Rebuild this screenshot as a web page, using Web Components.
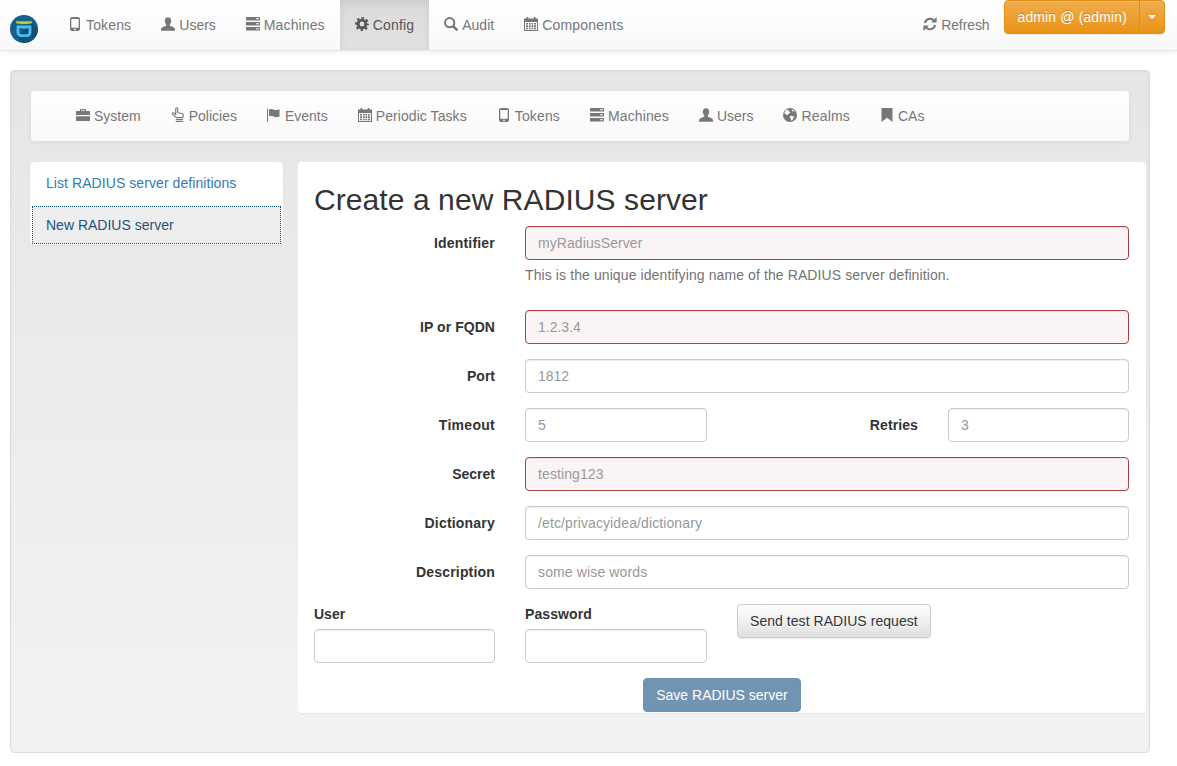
<!DOCTYPE html>
<html lang="en">
<head>
<meta charset="utf-8">
<title>Create a new RADIUS server</title>
<style>
html,body{margin:0;padding:0;height:766px;overflow:hidden;background:#fff}
body{font:14px/20px "Liberation Sans",Arial,sans-serif;color:#333}
</style>
</head>
<body>
<pi-navbar>
  <pi-logo slot="logo"></pi-logo>
  <pi-nav-item icon="phone" style="letter-spacing:.15px">Tokens</pi-nav-item>
  <pi-nav-item icon="user">Users</pi-nav-item>
  <pi-nav-item icon="tasks" style="letter-spacing:.12px">Machines</pi-nav-item>
  <pi-nav-item icon="cog" active style="letter-spacing:.17px">Config</pi-nav-item>
  <pi-nav-item icon="search">Audit</pi-nav-item>
  <pi-nav-item icon="calendar" style="letter-spacing:.2px">Components</pi-nav-item>
  <pi-nav-item slot="right" icon="refresh" style="letter-spacing:-.1px">Refresh</pi-nav-item>
  <pi-split-button slot="right" style="letter-spacing:.13px">admin @ (admin)</pi-split-button>
</pi-navbar>
<pi-well>
  <pi-subnav>
    <pi-nav-item sub icon="briefcase">System</pi-nav-item>
    <pi-nav-item sub icon="hand">Policies</pi-nav-item>
    <pi-nav-item sub icon="flag">Events</pi-nav-item>
    <pi-nav-item sub icon="calendar" style="letter-spacing:.07px">Periodic Tasks</pi-nav-item>
    <pi-nav-item sub icon="phone" style="letter-spacing:.15px">Tokens</pi-nav-item>
    <pi-nav-item sub icon="tasks" style="letter-spacing:.12px">Machines</pi-nav-item>
    <pi-nav-item sub icon="user">Users</pi-nav-item>
    <pi-nav-item sub icon="globe" style="letter-spacing:.17px">Realms</pi-nav-item>
    <pi-nav-item sub icon="bookmark">CAs</pi-nav-item>
  </pi-subnav>
  <pi-columns>
    <pi-side-menu slot="side">
      <pi-side-link style="letter-spacing:.07px">List RADIUS server definitions</pi-side-link>
      <pi-side-link current>New RADIUS server</pi-side-link>
    </pi-side-menu>
    <pi-panel>
      <pi-title style="letter-spacing:.08px">Create a new RADIUS server</pi-title>
      <pi-field label="Identifier" ls=".2" pls=".07" placeholder="myRadiusServer" invalid help="This is the unique identifying name of the RADIUS server definition."></pi-field>
      <pi-field label="IP or FQDN" ls=".05" placeholder="1.2.3.4" invalid></pi-field>
      <pi-field label="Port" placeholder="1812"></pi-field>
      <pi-field-pair label="Timeout" placeholder="5" label2="Retries" placeholder2="3"></pi-field-pair>
      <pi-field label="Secret" pls=".1" placeholder="testing123" invalid></pi-field>
      <pi-field label="Dictionary" ls=".2" pls=".11" placeholder="/etc/privacyidea/dictionary"></pi-field>
      <pi-field label="Description" ls=".18" pls=".13" placeholder="some wise words"></pi-field>
      <pi-test-row></pi-test-row>
      <pi-actions><pi-button kind="primary">Save RADIUS server</pi-button></pi-actions>
    </pi-panel>
  </pi-columns>
</pi-well>
<script>
const ICONS = {
  phone:'<path fill-rule="evenodd" d="M4.200 0h5.600C10.900 0 12 .9 12 2v10c0 1.100-1.100 2-2.200 2H4.200C3.100 14 2 13.100 2 12V2C2 .9 3.100 0 4.200 0zM3.300 1.900v8.900h7.400V1.900zM7 11.500a.9.9 0 1 0 0 1.800.9.900 0 0 0 0-1.800z"/>',
  user:'<path d="M7 .2C5 .2 3.800 1.700 3.800 3.800c0 1.500.6 2.900 1.400 3.700v1.300C3.500 9.600.4 10.200 0 12v1.800h14V12c-.4-1.800-3.500-2.400-5.200-3.200V7.500c.8-.8 1.400-2.200 1.400-3.700C10.200 1.700 9 .2 7 .2z"/>',
  tasks:'<path fill-rule="evenodd" d="M.6 0h12.800c.3 0 .6.300.6.600v3H0v-3C0 .3.300 0 .6 0zM10 1.300v1h3v-1zM0 5h14v3.500H0zM9.800 6.300v1h3.200v-1zM0 9.900h14v3.100c0 .3-.3.600-.6.600H.6c-.3 0-.6-.3-.6-.6zM10 11.200v1h3v-1z"/>',
  cog:'<circle cx="7" cy="7" r="3.900" fill="none" stroke="currentColor" stroke-width="2.900"/><circle cx="7" cy="7" r="6" fill="none" stroke="currentColor" stroke-width="2" stroke-dasharray="2.400 2.312" stroke-dashoffset="1.200"/>',
  search:'<path fill="none" stroke="currentColor" stroke-width="2" d="M5.700 1.100a4.600 4.600 0 1 0 0 9.200 4.600 4.600 0 0 0 0-9.200z"/><path fill="none" stroke="currentColor" stroke-width="2.500" stroke-linecap="round" d="M9.300 9.300l3.400 3.400"/>',
  calendar:'<path fill-rule="evenodd" d="M2.500 0h1.800v1.500h5.400V0h1.800v1.500H14V14H0V1.500h2.500zM1 5v8h12V5z"/><path d="M2 6h2v1.500H2zM5 6h1.700v1.500H5zM7.500 6h1.700v1.500H7.500zM10 6h2v1.500h-2zM2 8.300h2v1.600H2zM5 8.300h1.700v1.600H5zM7.500 8.300h1.700v1.600H7.500zM10 8.300h2v1.600h-2zM2 10.700h2v1.500H2zM5 10.700h1.700v1.500H5zM7.500 10.700h1.700v1.500H7.500zM10 10.700h2v1.500h-2z"/>',
  refresh:'<path fill="none" stroke="currentColor" stroke-width="2" d="M1.900 6.200A5.200 5.200 0 0 1 11 3.600"/><path d="M13.600 0v5.500H8.100z"/><path fill="none" stroke="currentColor" stroke-width="2" d="M12.100 7.800A5.200 5.200 0 0 1 3 10.400"/><path d="M.4 14V8.500h5.500z"/>',
  briefcase:'<path d="M5 1h4c.6 0 1 .4 1 1v1h3c.6 0 1 .4 1 1v3H0V4c0-.6.4-1 1-1h3V2c0-.6.4-1 1-1zm.200 1.200V3h3.600v-.8zM0 8.200h14V12c0 .6-.4 1-1 1H1c-.6 0-1-.4-1-1z"/>',
  hand:'<path fill="none" stroke="currentColor" stroke-width="1.100" stroke-linejoin="round" d="M4.700 .8c0-1.300 2-1.300 2 0v3.900l3.600.6c1.500.2 2.200 1 2 2.300l-.5 2H5.300L1.700 6.300c-.9-1 .4-2.100 1.300-1.200l1.700 1.400z"/><path d="M5.200 10.900h6.400c.3 0 .5.200.5.500v.7H4.700v-.7c0-.3.200-.5.500-.5zM4.700 12.800h7.400v.8c0 .3-.2.500-.5.500H5.200c-.3 0-.5-.2-.5-.5z"/>',
  flag:'<path d="M0 .5h1v13.300H0zM2 1.500c1.500-.7 3-.7 4.500 0s3 .7 4.500 0h1.500v7.300H11c-1.500.5-3 .5-4.500-.2s-3-.6-4.500-.1z"/>',
  globe:'<path fill-rule="evenodd" d="M7 0a7 7 0 1 1 0 14A7 7 0 0 1 7 0zM4.700 1.300C3 2 1.700 3.400 1.200 5.200c.7 0 1.100.5 1.500 1.100.6.700 1.400.8 2 .6.500-.2.500-1 1.100-1.400.6-.5 1.300-.4 1.400-1 .1-.5-.6-.6-1.100-.9-.5-.400-.2-1-.8-1.300-.3-.2-.6-.2-.6-1zM9 1.400c-.5.500-.2 1.200.300 1.700.5.500 1.400.4 2 .2.300-.1.600-.1.700 0C11.200 2.400 10.200 1.800 9 1.400zM8.600 7.800c-.7-.3-1.600 0-1.800.7-.2.700.4 1.200.8 1.800.4.600.1 1.400.500 2.200.4.200 1 .1 1.400-.5.500-.7.400-1.500 1-2.100.3-.5.900-.8.500-1.400-.4-.5-1-.1-1.500-.2-.300-.1-.500-.4-.9-.5z"/>',
  bookmark:'<path d="M1.500 0h11v14L7 9.700 1.500 14z"/>'
};

function define(name, css, html, setup){
  customElements.define(name, class extends HTMLElement{
    constructor(){
      super();
      const r = this.attachShadow({mode:'open'});
      r.innerHTML = '<style>' + css + '</style>' + html;
    }
    connectedCallback(){ if(setup) setup.call(this, this.shadowRoot); }
  });
}

define('pi-navbar', `
  :host{display:flex;height:50px;box-sizing:content-box;border-bottom:1px solid #e7e7e7;
    background:linear-gradient(to bottom,#fff 0,#f8f8f8 100%);
    box-shadow:inset 0 1px 0 rgba(255,255,255,.15),0 1px 5px rgba(0,0,0,.075)}
  .left{display:flex;flex:1}
  .right{display:flex;padding-right:12px}
`, `<div class="left"><slot name="logo"></slot><slot></slot></div><div class="right"><slot name="right"></slot></div>`);

define('pi-logo', `
  :host{display:flex;width:53px;padding:15px 0 0 10px;box-sizing:border-box}
  svg{display:block;width:28px;height:28px}
`, `<svg viewBox="0 0 28 28" aria-hidden="true"><circle cx="14" cy="14" r="14" fill="#14628b"/><path d="M6 21.500L13 28a14 14 0 0 0 15-13.500L22 8z" fill="#0f4c6e" opacity=".75"/><path d="M6 6.300h16v1.700c-2 1.300-14 1.300-16 0z" fill="#b6cb2f"/><path fill="#4cbcf0" fill-rule="evenodd" d="M6.600 10.500h14.800v7c0 2.700-2 4.500-4.500 4.500h-5.800c-2.500 0-4.500-1.800-4.500-4.500zM9.400 13.100v4.200c0 1.200.8 2 2 2h5.200c1.200 0 2-.8 2-2v-4.200c-2 .7-7.200.7-9.200 0z"/></svg>`);

define('pi-nav-item', `
  :host{display:flex;align-items:center;height:50px;padding:0 15px;color:#777;white-space:nowrap}
  :host([active]){color:#555;background:linear-gradient(to bottom,#dbdbdb 0,#e2e2e2 100%);box-shadow:inset 0 3px 9px rgba(0,0,0,.075)}
  svg{display:block;width:14px;height:14px;margin-right:4px;fill:currentColor;flex:none;position:relative;top:-1px;overflow:visible}
`, `<svg viewBox="0 0 14 14" aria-hidden="true"></svg><slot></slot>`, function(r){
  r.querySelector('svg').innerHTML = ICONS[this.getAttribute('icon')] || '';
});

define('pi-split-button', `
  :host{display:flex;height:34px;color:#fff;line-height:20px}
  div{background:linear-gradient(to bottom,#f0ad4e 0,#eb9316 100%);border:1px solid #e38d13;box-sizing:border-box;height:34px;
    text-shadow:0 -1px 0 rgba(0,0,0,.2);box-shadow:inset 0 1px 0 rgba(255,255,255,.15),0 1px 1px rgba(0,0,0,.075)}
  .main{padding:6px 12px;border-radius:4px 0 0 4px}
  .caret{width:26px;margin-left:-1px;border-radius:0 4px 4px 0;display:flex;align-items:center;justify-content:center}
  i{display:block;width:0;height:0;border-top:4px solid #fff;border-left:4px solid transparent;border-right:4px solid transparent}
`, `<div class="main"><slot></slot></div><div class="caret"><i></i></div>`);

define('pi-well', `
  :host{display:block;box-sizing:border-box;width:1140px;height:683px;margin:19px 0 0 10px;padding:20px 19px 19px;
    border:1px solid #dcdcdc;border-radius:4px;background:linear-gradient(to bottom,#e6e6e6 0,#f3f3f3 100%);
    box-shadow:inset 0 1px 3px rgba(0,0,0,.05),0 1px 0 rgba(255,255,255,.1)}
`, `<slot></slot>`);

define('pi-subnav', `
  :host{display:flex;height:50px;margin:0 1px;padding-left:30px;box-sizing:border-box;border-radius:4px;
    background:linear-gradient(to bottom,#fff 0,#f8f8f8 100%);
    box-shadow:inset 0 1px 0 rgba(255,255,255,.15),0 1px 5px rgba(0,0,0,.075)}
`, `<slot></slot>`);

define('pi-columns', `
  :host{display:flex;gap:15px;margin-top:21px;margin-right:-16px;align-items:flex-start}
`, `<slot name="side"></slot><slot></slot>`);

define('pi-side-menu', `
  :host{display:block;width:253px;flex:none;background:#fff;border-radius:4px;box-shadow:0 1px 2px rgba(0,0,0,.075);padding-bottom:1px}
`, `<slot></slot>`);

define('pi-side-link', `
  :host{display:block;height:42px;box-sizing:border-box;padding:11px 16px;color:#337ab7}
  :host([current]){height:38px;margin:2px 2px 0;padding:9px 14px;color:#23527c;background:#eee;outline:1px dotted #0b4f86;outline-offset:-1px}
`, `<slot></slot>`);

define('pi-panel', `
  :host{display:block;width:848px;height:551px;box-sizing:border-box;padding:0 16px 0 16px;background:#fff;border-radius:4px;box-shadow:0 1px 1px rgba(0,0,0,.05)}
`, `<slot></slot>`);

define('pi-title', `
  :host{display:block;font-size:30px;line-height:33px;font-weight:500;color:#333;padding:21px 0 10px}
`, `<slot></slot>`);

const INPUT_CSS = `
  input{display:block;box-sizing:border-box;width:100%;height:34px;padding:6px 12px;font:14px/20px "Liberation Sans",Arial,sans-serif;color:#555;
    background:#fff;border:1px solid #ccc;border-radius:4px;box-shadow:inset 0 1px 1px rgba(0,0,0,.075);margin:0}
  input::placeholder{color:#999;opacity:1}
  input.bad{border-color:#a94442;background:#faf4f4}
  label{font-weight:700;color:#333;display:block}
`;

define('pi-field', INPUT_CSS + `
  :host{display:grid;grid-template-columns:181px 604px;column-gap:30px;margin-bottom:15px}
  label{text-align:right;padding-top:7px}
  p{margin:5px 0 10px;color:#737373;grid-column:2;letter-spacing:.1px}
`, `<label></label><input type="text"><p hidden></p>`, function(r){
  const l = r.querySelector('label');
  l.textContent = this.getAttribute('label');
  l.style.letterSpacing = (this.getAttribute('ls') || 0) + 'px';
  const i = r.querySelector('input');
  i.placeholder = this.getAttribute('placeholder');
  i.style.letterSpacing = (this.getAttribute('pls') || 0) + 'px';
  if(this.hasAttribute('invalid')) i.className = 'bad';
  const h = this.getAttribute('help');
  if(h){ const p = r.querySelector('p'); p.textContent = h; p.hidden = false; }
});

define('pi-field-pair', INPUT_CSS + `
  :host{display:grid;grid-template-columns:181px 182px 181px 181px;column-gap:30px;margin-bottom:15px}
  label{text-align:right;padding-top:7px}
  #a{letter-spacing:.28px}
  #c{letter-spacing:.1px}
`, `<label id="a"></label><input id="b" type="text"><label id="c"></label><input id="d" type="text">`, function(r){
  r.getElementById('a').textContent = this.getAttribute('label');
  r.getElementById('b').placeholder = this.getAttribute('placeholder');
  r.getElementById('c').textContent = this.getAttribute('label2');
  r.getElementById('d').placeholder = this.getAttribute('placeholder2');
});

define('pi-test-row', INPUT_CSS + `
  :host{display:grid;grid-template-columns:181px 182px auto;column-gap:30px;margin-bottom:15px;align-items:start;justify-content:start}
  label{margin-bottom:5px}
  #p{letter-spacing:.1px}
  pi-button{letter-spacing:.05px}
`, `<div><label>User</label><input type="text"></div><div><label id="p">Password</label><input type="password"></div><pi-button>Send test RADIUS request</pi-button>`);

define('pi-button', `
  :host{display:inline-block;box-sizing:border-box;height:34px;padding:6px 12px;border:1px solid #ccc;border-radius:4px;white-space:nowrap;color:#333;
    background:linear-gradient(to bottom,#fff 0,#e0e0e0 100%);text-shadow:0 1px 0 #fff;
    box-shadow:inset 0 1px 0 rgba(255,255,255,.15),0 1px 1px rgba(0,0,0,.075)}
  :host([kind=primary]){color:#fff;background:#7294b3;border-color:#7093b1;text-shadow:none;box-shadow:none}
`, `<slot></slot>`);

define('pi-actions', `:host{display:block;text-align:center;height:34px}`, `<slot></slot>`);
</script>
</body>
</html>
